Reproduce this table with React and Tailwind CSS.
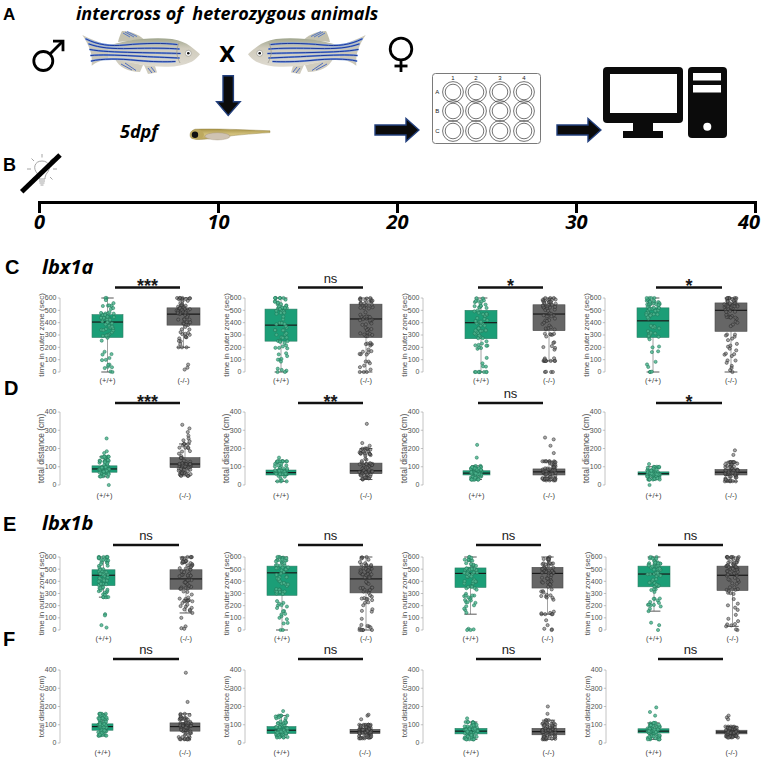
import React from 'react';

// deterministic jitter so the picture is stable between runs
function rng(seed) {
  let a = seed;
  return () => {
    a = (a + 0x6d2b79f5) | 0;
    let t = Math.imul(a ^ (a >>> 15), 1 | a);
    t = (t + Math.imul(t ^ (t >>> 7), 61 | t)) ^ t;
    return ((t ^ (t >>> 14)) >>> 0) / 4294967296;
  };
}

function quant(s, u) {
  const t = u * 4;
  const i = Math.min(3, Math.floor(t));
  return s[i] + (s[i + 1] - s[i]) * (t - i);
}

const COLS = [
  [28, 184],
  [212, 180],
  [392, 182],
  [574, 189],
];

const TIME = 'time in outer zone (sec)';
const DIST = 'total distance (cm)';

const ROWS = {
  C: {
    y0: 276, h: 112, bar: 287.5, top: 298, zero: 372, lab: 383, max: 600, ylabel: TIME, ls: 8,
    cols: [
      { axis: 60, g: [92, 123], k: [167, 200], bar: [115, 180], sig: '***', wt: { s: [0, 280, 405, 465, 600], o: [] }, ko: { s: [200, 380, 470, 520, 600], o: [60, 35, 20] } },
      { axis: 245, g: [265, 297], k: [350, 382], bar: [298, 363], sig: 'ns', wt: { s: [0, 250, 380, 510, 600], o: [] }, ko: { s: [0, 280, 430, 550, 600], o: [] } },
      { axis: 423, g: [465, 497], k: [533, 565], bar: [478, 543], sig: '*', wt: { s: [0, 270, 400, 500, 600], o: [] }, ko: { s: [90, 335, 470, 545, 600], o: [0, 0, 0, 2, 110, 100] } },
      { axis: 605, g: [637, 669], k: [715, 747], bar: [656, 722], sig: '*', wt: { s: [0, 280, 415, 520, 600], o: [] }, ko: { s: [0, 330, 500, 560, 600], o: [] } },
    ],
  },
  D: {
    y0: 388, h: 114, bar: 403, top: 412, zero: 485, lab: 497.5, max: 400, ylabel: DIST, ls: 8.5,
    cols: [
      { axis: 60, g: [92, 117], k: [170, 200], bar: [115, 180], sig: '***', wt: { s: [45, 70, 88, 105, 155], o: [255, 185, 175, 0] }, ko: { s: [50, 95, 115, 150, 225], o: [330, 310, 290, 270, 255, 245, 240] } },
      { axis: 245, g: [266, 296], k: [350, 382], bar: [298, 363], sig: '**', wt: { s: [20, 55, 68, 82, 130], o: [150] }, ko: { s: [30, 62, 78, 120, 200], o: [335, 230, 215] } },
      { axis: 423, g: [463, 490], k: [533, 565], bar: [478, 543], sig: 'ns', wt: { s: [30, 55, 65, 78, 105], o: [220, 150] }, ko: { s: [25, 55, 72, 88, 130], o: [260, 250, 215, 175] } },
      { axis: 605, g: [638, 669], k: [715, 747], bar: [656, 722], sig: '*', wt: { s: [30, 55, 62, 72, 100], o: [0, 115] }, ko: { s: [20, 55, 70, 85, 125], o: [190, 165] } },
    ],
  },
  E: {
    y0: 530, h: 116, bar: 545, top: 557, zero: 630, lab: 641, max: 600, ylabel: TIME, ls: 8,
    cols: [
      { axis: 60, g: [92, 115], k: [170, 202], bar: [113, 179], sig: 'ns', wt: { s: [270, 365, 450, 495, 600], o: [130, 120, 40, 20] }, ko: { s: [140, 335, 420, 495, 600], o: [100, 30, 15, 10] } },
      { axis: 245, g: [267, 297], k: [350, 382], bar: [298, 363], sig: 'ns', wt: { s: [0, 285, 470, 525, 600], o: [] }, ko: { s: [0, 305, 420, 525, 600], o: [] } },
      { axis: 423, g: [455, 486], k: [532, 563], bar: [476, 541], sig: 'ns', wt: { s: [130, 350, 465, 510, 600], o: [10, 5, 0, 0] }, ko: { s: [130, 345, 465, 515, 600], o: [80, 40, 10, 5, 0] } },
      { axis: 606, g: [638, 670], k: [717, 748], bar: [658, 723], sig: 'ns', wt: { s: [155, 355, 460, 525, 600], o: [60, 40, 0] }, ko: { s: [30, 325, 450, 525, 600], o: [0, 5] } },
    ],
  },
  F: {
    y0: 646, h: 115, bar: 659, top: 670, zero: 743, lab: 754.5, max: 400, ylabel: DIST, ls: 7.5,
    cols: [
      { axis: 60, g: [92, 113], k: [170, 200], bar: [113, 179], sig: 'ns', wt: { s: [40, 70, 90, 105, 160], o: [] }, ko: { s: [20, 65, 90, 110, 160], o: [385, 225] } },
      { axis: 245, g: [267, 296], k: [350, 380], bar: [298, 363], sig: 'ns', wt: { s: [30, 52, 70, 90, 150], o: [175] }, ko: { s: [25, 52, 62, 75, 100], o: [150, 155, 130] } },
      { axis: 423, g: [455, 487], k: [532, 565], bar: [476, 541], sig: 'ns', wt: { s: [20, 50, 65, 80, 115], o: [135] }, ko: { s: [20, 45, 62, 80, 125], o: [200, 160] } },
      { axis: 606, g: [638, 669], k: [716, 747], bar: [658, 723], sig: 'ns', wt: { s: [20, 55, 65, 78, 110], o: [195, 170, 150] }, ko: { s: [30, 50, 60, 70, 90], o: [150, 140, 130] } },
    ],
  },
};

const FONT = "'Liberation Sans', Arial, sans-serif";

function Box({ x, grp, row, wild, seed }) {
  const y = (v) => row.zero - (v / row.max) * (row.zero - row.top);
  const [x1, x2] = x;
  const bw = x2 - x1;
  const cx = (x1 + x2) / 2;
  const [lo, q1, med, q3, hi] = grp.s;
  const r = rng(seed);
  const pts = [];
  for (let i = 0; i < 72; i++) {
    const u = Math.min(1, Math.max(0, r() * 1.1 - 0.05));
    pts.push([cx + (r() - 0.5) * bw * 0.42, y(quant(grp.s, u))]);
  }
  grp.o.forEach((v) => pts.push([cx + (r() - 0.5) * bw * 0.35, y(v)]));
  const cap = bw * 0.2;

  return (
    <g>
      <line x1={cx} x2={cx} y1={y(lo)} y2={y(hi)} stroke="#8a8a8a" strokeWidth="0.8" />
      <line x1={cx - cap} x2={cx + cap} y1={y(lo)} y2={y(lo)} stroke="#444" strokeWidth="0.9" />
      <line x1={cx - cap} x2={cx + cap} y1={y(hi)} y2={y(hi)} stroke="#444" strokeWidth="0.9" />
      <rect
        x={x1}
        y={y(q3)}
        width={bw}
        height={y(q1) - y(q3)}
        fill={wild ? '#1b9e77' : '#666666'}
        stroke={wild ? '#2f7f66' : '#4a4a4a'}
        strokeWidth="0.6"
      />
      <line x1={x1} x2={x2} y1={y(med)} y2={y(med)} stroke="#1a1a1a" strokeWidth="1.2" />
      {pts.map(([px, py], i) => (
        <circle
          key={i}
          cx={px}
          cy={py}
          r="1.6"
          fill={wild ? '#4fb58f' : '#6e6e6e'}
          fillOpacity={wild ? 0.85 : 0.6}
          stroke={wild ? '#1d7255' : '#2a2a2a'}
          strokeWidth="0.5"
        />
      ))}
    </g>
  );
}

function Chart({ x0, w, row, c, seed }) {
  const y = (v) => row.zero - (v / row.max) * (row.zero - row.top);
  const ticks = [];
  for (let v = 0; v <= row.max; v += 100) ticks.push(v);
  const gc = (c.g[0] + c.g[1]) / 2;
  const kc = (c.k[0] + c.k[1]) / 2;
  const mid = (row.top + row.zero) / 2;
  const lx = c.axis - 16.5;
  const stars = c.sig !== 'ns';

  return (
    <svg width={w} height={row.h} viewBox={`${x0} ${row.y0} ${w} ${row.h}`} className="block shrink-0 overflow-visible">
      <line x1={c.bar[0]} x2={c.bar[1]} y1={row.bar} y2={row.bar} stroke="#111" strokeWidth="2.4" />
      <text
        x={(c.bar[0] + c.bar[1]) / 2}
        y={stars ? row.bar + 4.5 : row.bar - 5}
        textAnchor="middle"
        fontSize={stars ? 18 : 13}
        fontWeight={stars ? 700 : 400}
        fontFamily={FONT}
        fill="#1a1a1a"
      >
        {c.sig}
      </text>

      <line x1={c.axis} x2={c.axis} y1={row.top} y2={row.zero} stroke="#b5b5b5" strokeWidth="0.8" />
      {ticks.map((v) => (
        <g key={v}>
          <line x1={c.axis - 2.2} x2={c.axis} y1={y(v)} y2={y(v)} stroke="#9a9a9a" strokeWidth="0.6" />
          <text x={c.axis - 3.5} y={y(v) + 2.4} textAnchor="end" fontSize="7" fontFamily={FONT} fill="#505050">
            {v}
          </text>
        </g>
      ))}
      <text
        x={lx}
        y={mid}
        transform={`rotate(-90 ${lx} ${mid})`}
        textAnchor="middle"
        fontSize={row.ls}
        fontFamily={FONT}
        fill="#505050"
      >
        {row.ylabel}
      </text>

      <Box x={c.g} grp={c.wt} row={row} wild seed={seed} />
      <Box x={c.k} grp={c.ko} row={row} seed={seed + 101} />

      <text x={gc} y={row.lab} textAnchor="middle" fontSize="7.5" fontFamily={FONT} fill="#3a3a3a">
        (+/+)
      </text>
      <text x={kc} y={row.lab} textAnchor="middle" fontSize="7.5" fontFamily={FONT} fill="#3a3a3a">
        (-/-)
      </text>
    </svg>
  );
}

function ChartRow({ row, seed, letter }) {
  return (
    <div className="flex shrink-0">
      <div className="w-[28px] shrink-0">{letter}</div>
      {row.cols.map((c, i) => (
        <Chart key={i} x0={COLS[i][0]} w={COLS[i][1]} row={row} c={c} seed={seed + i * 17} />
      ))}
    </div>
  );
}

function Fish({ flip, id }) {
  const stripes = [
    'M6 11 C18 17 30 18.5 45 17 C65 15 85 15 97 16.5',
    'M9 16 C20 20 32 21 50 20.5 C70 20 88 20 99 21',
    'M10 21.5 C20 23.5 35 24 55 24.5 C75 25 90 25 100 25.5',
    'M11 27.5 C20 26.5 35 27 55 28 C72 29 88 29.5 99 30',
    'M11.5 33 C22 30.5 38 30.5 58 32.5 C72 33.8 85 34 95 33.5',
  ];
  return (
    <svg width="122" height="48" viewBox="0 0 122 48" className="block shrink-0">
      <defs>
        <linearGradient id={id} x1="0" y1="0" x2="0" y2="1">
          <stop offset="0" stopColor="#9fa58d" />
          <stop offset="0.35" stopColor="#cfcbbc" />
          <stop offset="1" stopColor="#dedad0" />
        </linearGradient>
      </defs>
      <g transform={flip ? 'translate(122 0) scale(-1 1)' : undefined}>
        <path d="M2.3 7 C10 11 20 15 30 17.7 L30 30.3 C22 32 15 35 11.7 37.7 C12 31 11.5 26 10 22 C8 16 5 11 2.3 7 Z" fill="#cbc7b7" />
        <path d="M38 14 C39 9 41 5 42 3 C50 3 58 6 64 11.5 Z" fill="#c3c1ae" />
        <path d="M35 31 C39 39 48 44 60 44 L63 37 Z" fill="#d0ccbe" />
        <path d="M64 37 L68 46 L77 44.5 L75 38 Z" fill="#d0ccbe" />
        <path d="M43 5 L50 9 M45 4 L54 9 M47 3.5 L57 8.5" stroke="#4a6fc8" strokeWidth="0.9" fill="none" />
        <path d="M41 36 L52 42 M45 35 L56 42.5 M68 40 L72 45 M71 39 L75 44" stroke="#3f62c0" strokeWidth="0.9" fill="none" />
        <path
          d="M28 17.7 C40 14 52 11.5 62 11 C72 10 82 9.7 92 11 C100 12.5 106 15 110 18 C114 21 118 24 120 26.3 C118 29 115 32 111.7 33.7 C104 37 96 38.7 88 38.7 C78 39 70 38 62 37 C50 35 38 32 28 30.3 Z"
          fill={`url(#${id})`}
        />
        {stripes.map((d, i) => (
          <g key={i}>
            <path d={d} stroke="#7ea0e0" strokeWidth="2" fill="none" strokeLinecap="round" />
            <path d={d} stroke="#1c389c" strokeWidth="1" fill="none" strokeLinecap="round" />
          </g>
        ))}
        <path d="M99 15 Q94 25 100 35" stroke="#9a968a" strokeWidth="0.7" fill="none" />
        <circle cx="108.3" cy="25.3" r="3" fill="#fff" stroke="#8a8a80" strokeWidth="0.6" />
        <circle cx="108.3" cy="25.3" r="1.3" fill="#111" />
      </g>
    </svg>
  );
}

function RightArrow() {
  return (
    <svg width="46" height="26" viewBox="0 0 46 26" className="block shrink-0">
      <path d="M1 8 L32 8 L32 1.5 L45 13 L32 24.5 L32 18 L1 18 Z" fill="#0b0b0b" stroke="#23407e" strokeWidth="1.4" strokeLinejoin="miter" />
    </svg>
  );
}

function Plate() {
  const xs = [22, 45, 69, 93];
  const ys = [20, 39, 59];
  return (
    <svg width="111" height="73" viewBox="0 0 111 73" className="block shrink-0">
      <rect x="1.5" y="1.5" width="108" height="70" rx="3" fill="#fff" stroke="#7a7a7a" strokeWidth="1" />
      {xs.map((x, i) => (
        <text key={i} x={x} y="8.3" fontSize="6" textAnchor="middle" fontFamily={FONT} fill="#222">
          {i + 1}
        </text>
      ))}
      {['A', 'B', 'C'].map((l, j) => (
        <text key={l} x="6.3" y={ys[j] + 2.2} fontSize="6" textAnchor="middle" fontFamily={FONT} fill="#222">
          {l}
        </text>
      ))}
      {ys.map((y) =>
        xs.map((x) => (
          <g key={`${x}-${y}`}>
            <circle cx={x} cy={y} r="10.4" fill="none" stroke="#3a3a3a" strokeWidth="0.7" />
            <circle cx={x} cy={y} r="7.8" fill="none" stroke="#3a3a3a" strokeWidth="0.7" />
          </g>
        ))
      )}
    </svg>
  );
}

export default function App() {
  const ital = "font-['Open_Sans',sans-serif]";
  return (
    <div className="flex h-[761px] w-[763px] flex-col overflow-hidden bg-white font-['Liberation_Sans',Arial,sans-serif] text-black">
      {/* A */}
      <div className="flex h-[150px] shrink-0">
        <div className="flex w-[425px] shrink-0 flex-col">
          <div className="flex h-[28px] items-start">
            <div className="mt-[6px] w-[76px] pl-[3px] text-[17px] font-bold leading-none">A</div>
            <div className={`${ital} mt-[3.5px] whitespace-pre text-[18px] font-bold italic leading-none`}>intercross of  heterozygous animals</div>
          </div>
          <div className="flex h-[47px] items-start">
            <svg width="40" height="40" viewBox="0 0 40 40" className="ml-[28px] mt-[8px] block shrink-0">
              <circle cx="15.3" cy="25" r="9.5" fill="none" stroke="#000" strokeWidth="2.8" />
              <path d="M22 18 L34.5 5.5" stroke="#000" strokeWidth="2.8" />
              <path d="M25 5.2 L35 5.2 L35 15.2" stroke="#000" strokeWidth="2.8" fill="none" />
            </svg>
            <div className="ml-[12px]">
              <Fish id="fishA" />
            </div>
            <div className="ml-[15px] mt-[17px] flex w-[20px] justify-center font-['DejaVu_Sans',sans-serif] text-[21px] font-bold leading-none">X</div>
            <div className="ml-[9px]">
              <Fish id="fishB" flip />
            </div>
            <svg width="32" height="40" viewBox="0 0 32 40" className="ml-[17px] mt-[7px] block shrink-0">
              <circle cx="16" cy="14" r="10.8" fill="none" stroke="#000" strokeWidth="2.8" />
              <path d="M16 24.8 L16 37" stroke="#000" strokeWidth="2.8" />
              <path d="M9.5 31 L22.5 31" stroke="#000" strokeWidth="2.8" />
            </svg>
          </div>
          <div className="flex h-[42px] items-start">
            <svg width="28" height="42" viewBox="0 0 28 42" className="ml-[215px] block shrink-0">
              <path d="M8 0.8 L18.4 0.8 L18.4 26.7 L25.2 26.7 L13.2 40.5 L1.6 26.7 L8 26.7 Z" fill="#0b0b0b" stroke="#23407e" strokeWidth="1.4" />
            </svg>
          </div>
          <div className="flex h-[33px] items-start">
            <div className={`${ital} ml-[120px] mt-[5px] w-[68px] text-[18px] font-bold italic leading-none`}>5dpf</div>
            <svg width="84" height="18" viewBox="0 0 84 18" className="mt-[9px] block shrink-0">
              <defs>
                <linearGradient id="larva" x1="0" y1="0" x2="0" y2="1">
                  <stop offset="0" stopColor="#a89447" />
                  <stop offset="0.5" stopColor="#d4c27e" />
                  <stop offset="1" stopColor="#b8a45e" />
                </linearGradient>
              </defs>
              <path d="M7 3.2 C25 2.4 52 3.6 82 4.8 L82 6.6 C62 7.8 44 9.5 30 11.5 C20 13 10 14.5 4 12.5 C1 11 1 5 7 3.2 Z" fill="url(#larva)" stroke="#8a7838" strokeWidth="0.4" />
              <ellipse cx="29.5" cy="10.3" rx="12.5" ry="3.6" fill="#cfc3b3" stroke="#9e8d72" strokeWidth="0.4" />
              <ellipse cx="9" cy="8.6" rx="7" ry="4.8" fill="#bda95f" />
              <circle cx="7" cy="8.8" r="3.2" fill="#111" />
            </svg>
            <div className="ml-[102px]">
              <RightArrow />
            </div>
          </div>
        </div>
        <div className="flex items-start pt-[66px]">
          <div className="ml-[6px] mt-[6px]">
            <Plate />
          </div>
          <div className="ml-[14px] mt-[51px]">
            <RightArrow />
          </div>
          <svg width="83" height="74" viewBox="0 0 83 74" className="block shrink-0">
            <rect x="1" y="1" width="80" height="56" rx="4" fill="#0b0b0b" />
            <rect x="8" y="8" width="67" height="39" fill="#fff" />
            <rect x="31" y="56" width="20" height="10" fill="#0b0b0b" />
            <rect x="21" y="65" width="40" height="7" fill="#0b0b0b" />
          </svg>
          <svg width="40" height="73" viewBox="0 0 40 73" className="ml-[3px] block shrink-0">
            <rect x="0" y="1" width="39" height="71" rx="4" fill="#0b0b0b" />
            <rect x="5" y="7" width="28" height="7.5" fill="#fff" />
            <rect x="5" y="19" width="28" height="7.5" fill="#fff" />
            <circle cx="19.3" cy="60.7" r="4" fill="#fff" />
          </svg>
        </div>
      </div>

      {/* B */}
      <div className="flex h-[106px] shrink-0 flex-col">
        <div className="flex h-[48px] items-start">
          <div className="mt-[6px] w-[18px] pl-[3px] text-[18px] font-bold leading-none">B</div>
          <svg width="46" height="44" viewBox="0 0 46 44" className="mt-[2px] block shrink-0">
            <path d="M19 21 C15 17 16 9 24 9 C32 9 33 17 29 21 C27.5 23 27 25 27 27 L21 27 C21 25 20.5 23 19 21 Z" fill="none" stroke="#9a9a9a" strokeWidth="0.9" />
            <path d="M21 29 L27 29 M21.5 31 L26.5 31 M22.5 33 L25.5 33" stroke="#9a9a9a" strokeWidth="0.9" />
            <path d="M9 17 L13 17 M35 17 L39 17 M24 2 L24 5.5 M13.5 6.5 L16 9 M34.5 6.5 L32 9 M13.5 27.5 L16 25 M34.5 27.5 L32 25" stroke="#9a9a9a" strokeWidth="0.9" />
            <path d="M3.7 39.7 L42 3" stroke="#000" strokeWidth="5" />
          </svg>
        </div>
        <div className="ml-[38px] mt-[3px] w-[719px]">
          <div className="h-[3px] bg-black" />
          <div className="flex justify-between">
            {['0', '10', '20', '30'].map((t) => (
              <div key={t} className="flex w-[3px] flex-col items-center">
                <div className="h-[9px] w-[3px] bg-black" />
                <div className={`${ital} -mt-[1px] whitespace-nowrap text-[20px] font-bold italic leading-none`}>{t}</div>
              </div>
            ))}
            <div className="flex w-[3px] flex-col items-end">
              <div className="h-[9px] w-[3px] bg-black" />
              <div className={`${ital} -mr-[3px] -mt-[1px] whitespace-nowrap text-[20px] font-bold italic leading-none`}>40</div>
            </div>
          </div>
        </div>
      </div>

      {/* C */}
      <div className="flex h-[20px] shrink-0 items-start">
        <div className="mt-[1px] w-[42px] pl-[5px] text-[20px] font-bold leading-none">C</div>
        <div className={`${ital} mt-[1px] text-[20px] font-bold italic leading-none`}>lbx1a</div>
      </div>
      <ChartRow row={ROWS.C} seed={11} />
      <ChartRow row={ROWS.D} seed={211} letter={<div className="-mt-[10px] pl-[4px] text-[20px] font-bold leading-none">D</div>} />

      {/* E */}
      <div className="flex h-[28px] shrink-0 items-start">
        <div className="mt-[12px] w-[42px] pl-[3px] text-[20px] font-bold leading-none">E</div>
        <div className={`${ital} mt-[11px] text-[20px] font-bold italic leading-none`}>lbx1b</div>
      </div>
      <ChartRow row={ROWS.E} seed={411} />
      <ChartRow row={ROWS.F} seed={611} letter={<div className="-mt-[17px] pl-[3px] text-[20px] font-bold leading-none">F</div>} />
    </div>
  );
}
